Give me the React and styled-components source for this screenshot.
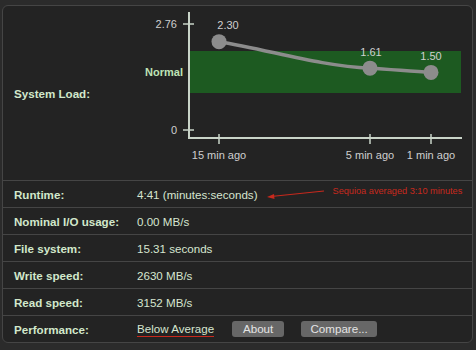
import React from "react";
import styled, { createGlobalStyle } from "styled-components";

const GlobalStyle = createGlobalStyle`
	body {
		margin: 0;
		background: #2b2b2b;
		font-family: "Liberation Sans", Arial, sans-serif;
	}
`;

const Page = styled.div`
	padding: 5px 3px 0 2px;
`;

const Panel = styled.div`
	background: #232323;
	border: 1px solid #454545;
	border-radius: 6px;
	overflow: hidden;
`;

const Row = styled.div`
	display: grid;
	grid-template-columns: 123px 1fr;
	align-items: center;
	height: ${(p) => p.height || 26}px;
	padding-left: 11px;
	border-bottom: ${(p) => (p.last ? "none" : "1px solid #454545")};
`;

const Label = styled.div`
	color: #d2e8cb;
	font-size: 11.6px;
	font-weight: bold;
	white-space: nowrap;
`;

const Value = styled.div`
	display: flex;
	align-items: center;
	color: #d6e5d0;
	font-size: 11.6px;
	height: 100%;
	white-space: nowrap;
	min-width: 0;
`;

const Note = styled.span`
	align-self: flex-start;
	padding-top: 5px;
	margin-left: 9px;
	color: #c8291d;
	font-size: 9.2px;
	flex-shrink: 0;
`;

const Underlined = styled.span`
	border-bottom: 1.5px solid #c8291d;
	padding-bottom: 1px;
	margin-right: 18px;
`;

const Button = styled.button`
	background: #676767;
	color: #e4e4e4;
	font-family: inherit;
	font-size: 11.6px;
	border: none;
	border-radius: 3px;
	height: 16px;
	width: ${(p) => p.width}px;
	padding: 0;
	margin-right: 17px;
	line-height: 16px;
	flex-shrink: 0;
`;

const Chart = styled.svg`
	display: block;
	width: 335px;
	height: 174px;
`;

const points = [
	{ x: 219, v: 2.3, label: "15 min ago", lx: 228, ly: 25 },
	{ x: 370, v: 1.61, label: "5 min ago", lx: 371, ly: 52 },
	{ x: 431, v: 1.5, label: "1 min ago", lx: 431, ly: 56 },
];

const yOf = (v) => 130 - v * (106 / 2.76);

const LoadChart = () => {
	const [a, b, c] = points.map((p) => ({ x: p.x, y: yOf(p.v) }));
	const line = `M${a.x} ${a.y} C ${a.x + 50} ${a.y + 8}, ${b.x - 50} ${b.y - 2}, ${b.x} ${b.y} C ${b.x + 20} ${b.y + 1}, ${c.x - 20} ${c.y - 1}, ${c.x} ${c.y}`;
	const axis = "#c9d4c8";
	const tickText = { fill: "#cfcfcf", fontSize: 11, fontFamily: "Liberation Sans, Arial, sans-serif" };

	return (
		<Chart viewBox="137 6 335 174">
			<rect x="190" y="51" width="271" height="42" fill="#1d5a21" />
			<text x="183" y="76" textAnchor="end" fill="#bfe3b6" fontSize="11" fontWeight="bold" fontFamily="Liberation Sans, Arial, sans-serif">
				Normal
			</text>

			<line x1="189" y1="12" x2="189" y2="139" stroke={axis} strokeWidth="2" />
			<line x1="188" y1="138" x2="462" y2="138" stroke={axis} strokeWidth="2" />
			<line x1="183" y1="24" x2="194" y2="24" stroke={axis} strokeWidth="1.5" />
			<line x1="183" y1="130" x2="194" y2="130" stroke={axis} strokeWidth="1.5" />
			<text x="177" y="28" textAnchor="end" {...tickText}>2.76</text>
			<text x="177" y="134" textAnchor="end" {...tickText}>0</text>

			<path d={line} fill="none" stroke="#8c8c8c" strokeWidth="3.5" />
			{points.map((p) => (
				<g key={p.label}>
					<circle cx={p.x} cy={yOf(p.v)} r="7.5" fill="#8c8c8c" />
					<line x1={p.x} y1="134" x2={p.x} y2="144" stroke={axis} strokeWidth="1.5" />
					<text x={p.lx} y={p.ly + 4} textAnchor="middle" {...tickText}>
						{p.v.toFixed(2)}
					</text>
					<text x={p.x} y="159" textAnchor="middle" {...tickText}>
						{p.label}
					</text>
				</g>
			))}
		</Chart>
	);
};

const Arrow = () => (
	<svg width="57" height="14" viewBox="0 0 57 14" style={{ marginLeft: 9, flexShrink: 0 }}>
		<line x1="4" y1="9.5" x2="57" y2="4" stroke="#c8291d" strokeWidth="1.2" />
		<path d="M0 10 L7 7 L7.5 12 Z" fill="#c8291d" />
	</svg>
);

const App = () => {
	return (
		<Page>
			<GlobalStyle />
			<Panel>
				<Row height={174}>
					<Label>System Load:</Label>
					<Value>
						<LoadChart />
					</Value>
				</Row>
				<Row>
					<Label>Runtime:</Label>
					<Value>
						4:41 (minutes:seconds)
						<Arrow />
						<Note>Sequioa averaged 3:10 minutes</Note>
					</Value>
				</Row>
				<Row>
					<Label>Nominal I/O usage:</Label>
					<Value>0.00 MB/s</Value>
				</Row>
				<Row>
					<Label>File system:</Label>
					<Value>15.31 seconds</Value>
				</Row>
				<Row>
					<Label>Write speed:</Label>
					<Value>2630 MB/s</Value>
				</Row>
				<Row>
					<Label>Read speed:</Label>
					<Value>3152 MB/s</Value>
				</Row>
				<Row last>
					<Label>Performance:</Label>
					<Value>
						<Underlined>Below Average</Underlined>
						<Button width={52}>About</Button>
						<Button width={76}>Compare...</Button>
					</Value>
				</Row>
			</Panel>
		</Page>
	);
};

export default App;
